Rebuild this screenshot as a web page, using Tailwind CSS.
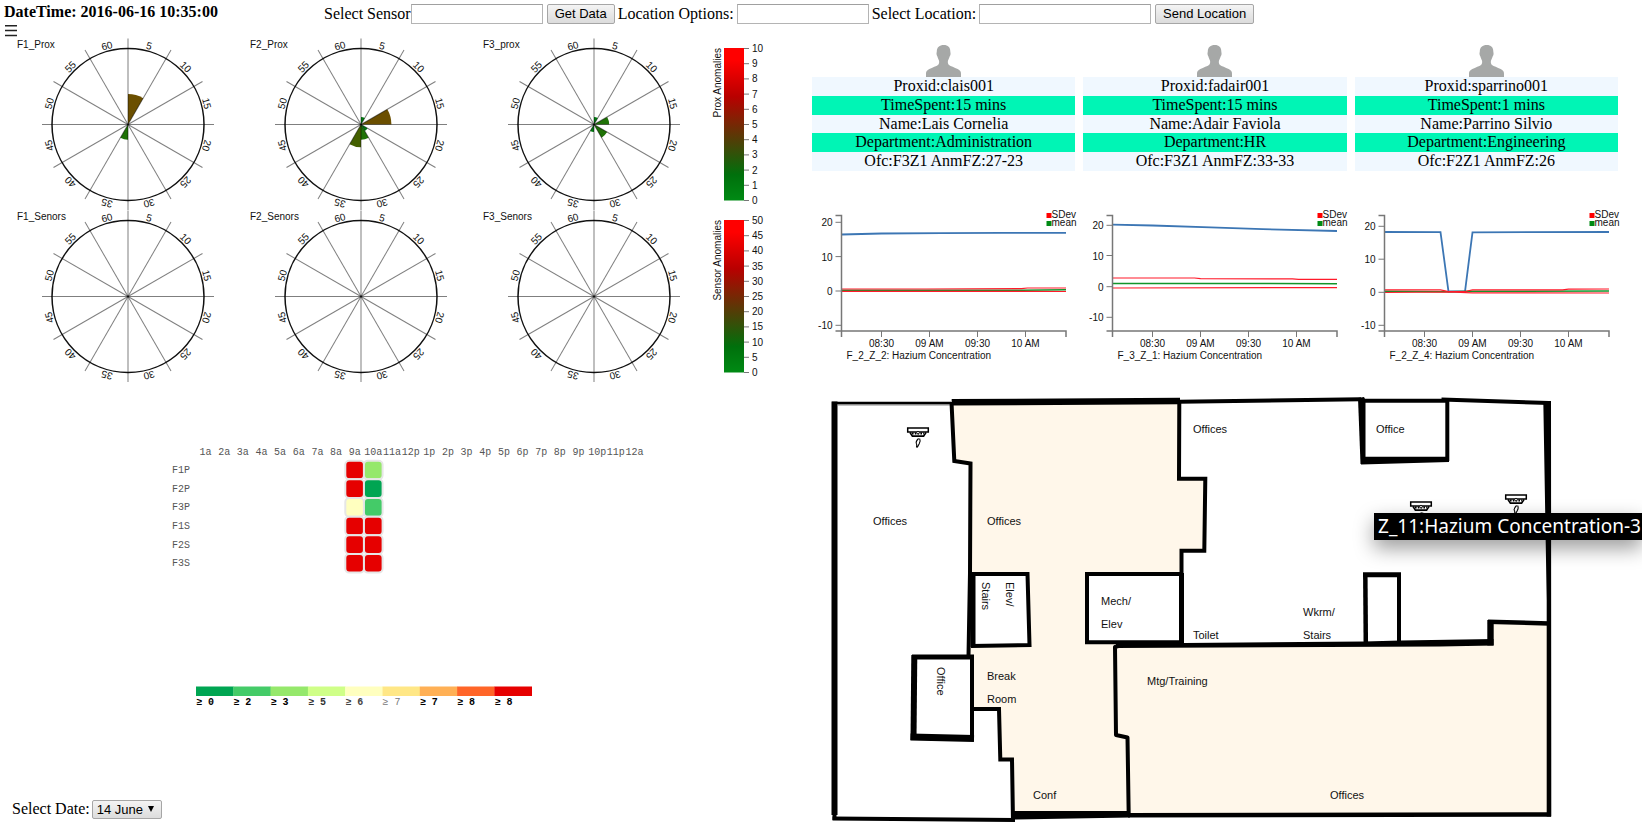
<!DOCTYPE html>
<html lang="en">

<head>
    <meta charset="UTF-8" />
    <meta name="viewport" content="width=device-width, initial-scale=1.0" />
    <title>Building Monitor</title>
    <script src="https://cdn.jsdelivr.net/npm/@tailwindcss/browser@4"></script>
</head>

<body class="bg-white text-black text-base font-['Liberation_Serif',serif] overflow-x-hidden">

    <!-- Top bar -->
    <header class="flex items-center h-6 pl-1 whitespace-nowrap">
        <h1 class="w-80 shrink-0 font-bold">DateTime: <time>2016-06-16 10:35:00</time></h1>
        <form class="flex items-center pt-1" onsubmit="return false">
            <label for="sensor">Select Sensor</label>
            <input id="sensor" type="text" class="w-[132px] h-5 px-1 text-[13px] border border-[#b4b4b4] border-t-[#a0a0a0] bg-white">
            <button type="button" class="ml-1 h-5 px-[7px] text-[13px] leading-[18px] font-['Liberation_Sans',sans-serif] border border-[#a6a6a6] rounded-xs bg-linear-to-b from-[#f4f4f4] to-[#dcdcdc]">Get Data</button>
            <label for="options" class="ml-[3px]">Location Options:</label>
            <input id="options" type="text" class="ml-[3px] w-[132px] h-5 px-1 text-[13px] border border-[#b4b4b4] border-t-[#a0a0a0] bg-white">
            <label for="location" class="ml-[3px]">Select Location:</label>
            <input id="location" type="text" class="ml-[3px] w-[172px] h-5 px-1 text-[13px] border border-[#b4b4b4] border-t-[#a0a0a0] bg-white">
            <button type="button" class="ml-1 h-5 px-[7px] text-[13px] leading-[18px] font-['Liberation_Sans',sans-serif] border border-[#a6a6a6] rounded-xs bg-linear-to-b from-[#f4f4f4] to-[#dcdcdc]">Send Location</button>
        </form>
    </header>

    <main class="flex pt-px">

        <!-- Left side: roses, heatmap, date -->
        <section class="shrink-0">
            <button type="button" aria-label="Menu" class="block h-3 ml-[5px] mb-px">
                <svg width="12" height="12" viewBox="0 0 12 12" stroke="#222" stroke-width="1.5">
                    <path d="M0 .8h12M0 5.5h12M0 10.5h12" />
                </svg>
            </button>

            <div id="proxRow" class="flex"></div>
            <div id="sensorRow" class="flex"></div>

            <svg id="heatmap" class="block mt-12 font-['Liberation_Mono',monospace] text-[10px]" width="699" height="290" viewBox="0 430 699 290"></svg>

            <div class="flex items-center mt-[77px] ml-3">
                <label for="fecha">Select Date:</label>
                <div class="relative ml-0.5 h-[19px]">
                    <select id="fecha" class="block appearance-none h-[19px] w-[70px] pl-1 text-[13px] leading-[17px] font-['Liberation_Sans',sans-serif] border border-[#a6a6a6] rounded-xs bg-linear-to-b from-[#f4f4f4] to-[#dcdcdc]">
                        <option>14 June</option>
                        <option>15 June</option>
                        <option>16 June</option>
                    </select>
                    <svg class="absolute right-2 top-1.5 pointer-events-none" width="6" height="6" viewBox="0 0 6 6"><path d="M0 0h6L3 6z" /></svg>
                </div>
            </div>
        </section>

        <!-- Right side: people, charts, floor plan -->
        <section class="flex-1 min-w-0 pl-2 pt-5">
            <div id="people" class="grid grid-cols-3 gap-2 pr-6 text-center leading-[18px]"></div>
            <div id="charts" class="grid grid-cols-3 gap-2 pr-6 mt-[29px]"></div>

            <div class="relative mt-5">
                <svg class="block w-full font-['Liberation_Sans',sans-serif] text-[11px]" viewBox="812 390 830 441">
                    <defs>
                        <g id="detector" fill="none" stroke="#000">
                            <path d="M.7 .9h20.6v4H.7z" fill="#fff" stroke-width="1.5" />
                            <path d="M3 5.5l2.4 3.6h11.2L19 5.5" stroke-width="1.6" />
                            <path d="M5 6.6h12" stroke-width="2" stroke-dasharray="1.6 1.2" />
                            <circle cx="11" cy="5.6" r="1.3" fill="#fff" stroke-width=".9" />
                            <path d="M11.6 11.5c-2 2-3 3.2-2.3 4.800.7 1.200.7 2.200.2 4.200M12.600 11.500c1.300 2.500.3 4-.4 5.200-.8 1.300-1 2.400-2 3.800" stroke-width="1.1" />
                        </g>
                    </defs>

                    <!-- Shaded zones -->
                    <g fill="#fff7ea">
                        <path d="M952 403H1179V479H1205L1204 551H1182V643L1115 645 1116 735 1128 738 1129 815H1013L1012 759H1000L999 709H973L969 655 970 463 954 461z" />
                        <path d="M1115 645L1490 644V622L1549 623V815H1129L1128 738 1116 735z" />
                    </g>
                    <g fill="#fff">
                        <path d="M973 574H1027L1029 645H973z" />
                        <path d="M1087 574H1182V642H1087z" />
                        <path d="M914 657H972V738H914z" />
                    </g>

                    <!-- Walls -->
                    <g fill="none" stroke="#000" stroke-width="4">
                        <path d="M834.5 401.5V815" stroke-width="6" />
                        <path d="M834.5 812V820" />
                        <path d="M832 403H951" stroke-width="2.5" />
                        <path d="M838 404.7H950" stroke="#888" stroke-width="1.5" />
                        <path d="M832.5 818.5L1015 820" />
                        <path d="M951.5 402L954.3 461 970.5 463.5 970 573 968.5 656" />
                        <path d="M951.7 402.3L1180 401" stroke-width="6.5" />
                        <path d="M1179.3 402L1179 478.7H1205.3L1204.3 550.7H1181.5V643" />
                        <path d="M1181.5 573V644" stroke-width="5" />
                        <path d="M1179 401.7L1361 399.3" />
                        <path d="M1361 400.7H1447" />
                        <path d="M1441.5 399.5L1549 403" />
                        <path d="M1447.3 401V461" />
                        <path d="M1363 574.7H1401" stroke-width="5" />
                        <path d="M1365.3 573L1365.8 643" stroke-width="4.5" />
                        <path d="M1399 573V643" />
                        <path d="M1488 621.8L1549 623.5" stroke-width="4.5" />
                        <path d="M1182 642.2H1087V574H1182" />
                        <path d="M1120 645.5L1115 647 1116 735 1127.5 737.5 1128.7 815" stroke-linejoin="round" />
                        <path d="M1128 815.3L1551 814.5" stroke-width="4.5" />
                        <path d="M973 709H999L1000.3 759.5H1012L1013 821" />
                        <path d="M971 574H1027.5L1029.5 645 971 646" />
                        <path d="M973 573V647" stroke-width="5" />
                        <path d="M912 657H974" stroke-width="5" />
                        <path d="M914.3 655L913.5 740" stroke-width="6" />
                        <path d="M972 656V741" />
                        <path d="M910.5 737L974 738.5" stroke-width="7" />
                    </g>
                    <g fill="#000">
                        <path d="M1543.3 401H1551L1551.3 816.5H1546.7V600z" />
                        <path d="M1358 398L1364 397 1365.5 400V464H1360.5z" />
                        <path d="M1361 456.7H1449V462L1361 464.5z" />
                        <path d="M1116 643.5L1185 643 1364 641.5 1401 640.500 1493.5 639V645.5L1440 646.5 1116 648z" />
                        <path d="M1487.3 620H1493.7V645.5H1487.3z" />
                        <path d="M1013 811H1130V817.5L1013 819.5z" />
                    </g>

                    <use href="#detector" x="907" y="427" />
                    <use href="#detector" x="1410" y="501" />
                    <use href="#detector" x="1505" y="494" />

                    <!-- Room names -->
                    <g fill="#111">
                        <text x="873" y="525">Offices</text>
                        <text x="987" y="525">Offices</text>
                        <text x="1193" y="433">Offices</text>
                        <text x="1376" y="433">Office</text>
                        <text x="1101" y="605">Mech/</text>
                        <text x="1101" y="628">Elev</text>
                        <text x="1193" y="639">Toilet</text>
                        <text x="1303" y="616">Wkrm/</text>
                        <text x="1303" y="639">Stairs</text>
                        <text x="987" y="680">Break</text>
                        <text x="987" y="703">Room</text>
                        <text x="1147" y="685">Mtg/Training</text>
                        <text x="1033" y="799">Conf</text>
                        <text x="1330" y="799">Offices</text>
                        <text transform="translate(982 582) rotate(90)">Stairs</text>
                        <text transform="translate(1006 582) rotate(90)">Elev/</text>
                        <text transform="translate(937 667) rotate(90)">Office</text>
                    </g>
                </svg>
                <div role="tooltip" class="absolute right-0 top-[123px] h-[27px] pl-1 pr-px bg-black text-white text-[19px] leading-[26px] font-['Noto_Sans',sans-serif] whitespace-nowrap shadow-[0_8px_20px_rgba(0,0,0,0.4)]">Z_11:Hazium Concentration-3</div>
            </div>
        </section>
    </main>

    <script>
        const R = 76;

        // ---- Rose charts ----
        function sector(i, value, color) {
            const r = value * R / 10;
            const a0 = i * Math.PI / 6, a1 = (i + 1) * Math.PI / 6;
            return `<path fill="${color}" d="M0 0L${r * Math.sin(a0)} ${-r * Math.cos(a0)}A${r} ${r} 0 0 1 ${r * Math.sin(a1)} ${-r * Math.cos(a1)}z"/>`;
        }

        const colors = { 1: "#007a10", 2: "#1f7206", 3: "#446000", 4: "#6b4f00" };

        function rose(name, data) {
            let s = "";
            data.forEach(d => { s += sector(d[0], d[1], colors[d[1]]); });
            s += `<circle r="${R}" fill="none" stroke="#111" stroke-width="1.5"/>`;
            for (let i = 0; i < 12; i++) {
                s += `<line y2="-86" transform="rotate(${i * 30})" stroke="#000" stroke-opacity=".5"/>`;
                s += `<text text-anchor="middle" transform="rotate(${i * 30 + 15}) translate(0 -78)">${(i + 1) * 5}</text>`;
            }
            return `<svg class="block font-['Liberation_Sans',sans-serif] text-[10px]" fill="#111" width="233" height="172" viewBox="0 0 233 172">
                <text x="17" y="10">${name}</text><g transform="translate(128 86.5)">${s}</g></svg>`;
        }

        function scale(name, max, id) {
            let s = "";
            for (let i = 0; i <= 10; i++) {
                const y = 162.5 - i * 15.2;
                s += `<line x1="45" x2="50" y1="${y}" y2="${y}" stroke="#777"/><text x="53" y="${y + 3.5}">${i * max / 10}</text>`;
            }
            return `<svg class="block font-['Liberation_Sans',sans-serif] text-[10px]" fill="#111" width="105" height="172" viewBox="0 0 105 172">
                <linearGradient id="${id}" x1="0" y1="1" x2="0" y2="0">
                    <stop offset="0" stop-color="#008a14"/><stop offset=".17" stop-color="#00700c"/>
                    <stop offset=".68" stop-color="#b80000"/><stop offset=".92" stop-color="#ff0000"/>
                </linearGradient>
                <rect x="25" y="10" width="20" height="152.5" fill="url(#${id})"/>${s}
                <text text-anchor="end" transform="translate(22 10) rotate(-90)">${name}</text></svg>`;
        }

        document.getElementById("proxRow").innerHTML =
            rose("F1_Prox", [[0, 4], [6, 2]]) +
            rose("F2_Prox", [[0, 1], [2, 4], [4, 1], [5, 2], [6, 3]]) +
            rose("F3_prox", [[0, 1], [2, 2], [4, 2], [6, 1]]) +
            scale("Prox Anomalies", 10, "g1");
        document.getElementById("sensorRow").innerHTML =
            rose("F1_Senors", []) + rose("F2_Senors", []) + rose("F3_Senors", []) +
            scale("Sensor Anomalies", 50, "g2");

        // ---- Heatmap ----
        const palette = ["#00a552", "#44cb68", "#95e86b", "#cfff88", "#ffffbf", "#ffe786", "#ffb055", "#ff6528", "#e60000"];
        const rows = { F1P: [8, 2], F2P: [8, 0], F3P: [4, 1], F1S: [8, 8], F2S: [8, 8], F3S: [8, 8] };
        const cell = 18.65;
        let heat = "";
        for (let h = 0; h < 24; h++) {
            heat += `<text fill="#555" text-anchor="middle" x="${205.5 + h * cell}" y="455">${h % 12 + 1}${h < 11 || h === 23 ? "a" : "p"}</text>`;
        }
        Object.keys(rows).forEach((name, i) => {
            heat += `<text fill="#555" text-anchor="end" x="190" y="${473 + i * cell}">${name}</text>`;
            rows[name].forEach((v, j) => {
                heat += `<rect x="${345.3 + j * cell}" y="${460.7 + i * cell}" width="${cell}" height="${cell}" rx="4" fill="${palette[v]}" stroke="#e6e6e6" stroke-width="2"/>`;
            });
        });
        [["0", "#000"], ["2", "#000"], ["3", "#000"], ["5", "#333"], ["6", "#444"], ["7", "#777"], ["7", "#000"], ["8", "#000"], ["8", "#000"]].forEach((l, i) => {
            const weight = l[1] === "#777" ? "normal" : "bold";
            heat += `<rect x="${196 + i * 37.3}" y="686.5" width="37.6" height="9.5" fill="${palette[i]}"/>
                <text x="${196 + i * 37.3}" y="705" fill="${l[1]}" font-weight="${weight}">≥ ${l[0]}</text>`;
        });
        document.getElementById("heatmap").innerHTML = heat;

        // ---- People ----
        const people = [
            ["Proxid:clais001", "TimeSpent:15 mins", "Name:Lais Cornelia", "Department:Administration", "Ofc:F3Z1 AnmFZ:27-23"],
            ["Proxid:fadair001", "TimeSpent:15 mins", "Name:Adair Faviola", "Department:HR", "Ofc:F3Z1 AnmFZ:33-33"],
            ["Proxid:sparrino001", "TimeSpent:1 mins", "Name:Parrino Silvio", "Department:Engineering", "Ofc:F2Z1 AnmFZ:26"]
        ];
        document.getElementById("people").innerHTML = people.map(p => `
            <article>
                <svg class="block mx-auto" width="35" height="32" viewBox="0 0 35 32" fill="#a6a8a7">
                    <path d="M17.8 0c4.2 0 6.5 2.3 6.5 6.3 0 1.3.5 1.6.2 3.3-.2 1.3-.8 1.5-1.2 2.8-.5 1.6-1.2 2.5-1.4 3.6-.2 1.7.1 3.3 1.1 4 1.5 1.1 5.5 2.5 8.7 4.1 2.3 1.2 3.3 2.3 3.3 4.7V32H0v-3.2c0-2.4 1-3.5 3.3-4.7 3.2-1.6 7.2-3 8.7-4.1 1-.7 1.3-2.3 1.1-4-.2-1.1-.9-2-1.4-3.6-.3-1.3-.9-1.5-1.1-2.8-.3-1.7.2-2 .2-3.300C10.800 2.300 13.500 0 17.800 0z"/>
                </svg>
                <ul class="grid grid-rows-5 h-[94px]">${p.map((t, i) => `<li class="${i % 2 ? "bg-[#00f5b5]" : "bg-[#f0f8ff]"}">${t}</li>`).join("")}</ul>
            </article>`).join("");

        // ---- Hazium line charts ----
        const charts = [
            {
                title: "F_2_Z_2: Hazium Concentration", y: [22.3, 56.6, 91, 125.3],
                blue: "0,34.5 40,33.5 100,33.2 160,32.8 224.5,32.8",
                up: "0,89 85,89 180,88.7 186,88 224.5,88", mean: "0,90.3 180,90.3 224.5,89.8", low: "0,91.3 224.5,91.5"
            },
            {
                title: "F_3_Z_1: Hazium Concentration", y: [25.3, 55.5, 86.7, 117.3],
                blue: "0,24.7 40,25.5 98,27.4 150,29.2 224.5,31",
                up: "0,78 82,78 88,78.7 180,78.8 186,79.4 224.5,79.4", mean: "0,83.4 82,83.4 88,83.5 224.5,83.7", low: "0,88 224.5,87.6"
            },
            {
                title: "F_2_Z_4: Hazium Concentration", y: [26.3, 59.2, 92.3, 125.3],
                blue: "0,32 56,32.2 64,91.5 80.5,91.5 88,32.3 224.5,32",
                up: "0,89.8 56,89.8 64,91.5 80.5,91.5 88,89.8 178,89.8 184,89.2 224.5,89", mean: "0,91.3 64,91.8 88,91.3 224.5,91", low: "0,92.5 64,92 88,92.8 224.5,93"
            }
        ];
        document.getElementById("charts").innerHTML = charts.map(c => `
            <svg class="block overflow-visible font-['Liberation_Sans',sans-serif] text-[10px]" fill="#111" width="263" height="170" viewBox="0 0 263 170">
                <g transform="translate(29.5 0)">
                    <g fill="none" stroke-width="1.5">
                        <polyline points="${c.blue}" stroke="#3c76b4" stroke-width="1.8"/>
                        <polyline points="${c.mean}" stroke="#12952a"/>
                        <polyline points="${c.low}" stroke="#ff1a2a" stroke-width="1.2"/>
                        <polyline points="${c.up}" stroke="#ff1a2a" stroke-width="1.2"/>
                        <path d="M-6 15.5H0V131M-6 131H224.5V137M0 131V137" stroke="#777"/>
                    </g>
                    ${c.y.map((y, i) => `<line x1="-6" x2="0" y1="${y}" y2="${y}" stroke="#777"/><text text-anchor="end" x="-9" y="${y + 4}">${20 - i * 10}</text>`).join("")}
                    ${["08:30", "09 AM", "09:30", "10 AM"].map((t, i) => `<line x1="${40 + i * 48}" x2="${40 + i * 48}" y1="131" y2="137" stroke="#777"/><text text-anchor="middle" x="${40 + i * 48}" y="147">${t}</text>`).join("")}
                    <text x="5" y="159">${c.title}</text>
                    <rect x="205" y="13" width="5" height="5" fill="#f00"/><text x="210" y="18">SDev</text>
                    <rect x="205" y="21" width="5" height="5" fill="#008a14"/><text x="210" y="26">mean</text>
                </g>
            </svg>`).join("");
    </script>
</body>

</html>
